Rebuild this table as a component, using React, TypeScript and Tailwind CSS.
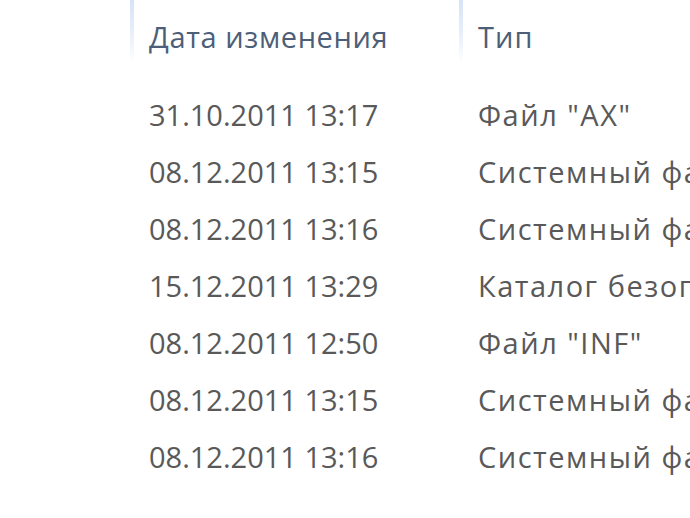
const rows: [string, string][] = [
  ["31.10.2011 13:17", 'Файл "AX"'],
  ["08.12.2011 13:15", "Системный файл"],
  ["08.12.2011 13:16", "Системный файл"],
  ["15.12.2011 13:29", "Каталог безопасности"],
  ["08.12.2011 12:50", 'Файл "INF"'],
  ["08.12.2011 13:15", "Системный файл"],
  ["08.12.2011 13:16", "Системный файл"],
];

function Sep() {
  return (
    <div className="w-[4px] h-[64px] shrink-0 self-start bg-gradient-to-b from-[#d6e4f6] via-[#e6eefa] to-transparent" />
  );
}

export default function App() {
  return (
    <div
      className="w-[690px] h-[518px] overflow-hidden bg-white text-[29px] whitespace-nowrap"
      style={{ fontFamily: '"Open Sans", "Noto Sans", sans-serif' }}
    >
      <div className="flex h-[74px] items-center">
        <div className="w-[130px] shrink-0" />
        <Sep />
        <div className="w-[325px] shrink-0 pl-[15px] text-[#4d5f78] tracking-[0.6px]">Дата изменения</div>
        <Sep />
        <div className="pl-[15px] text-[#4d5f78] tracking-[1px]">Тип</div>
      </div>
      <div className="mt-[12px] flex flex-col">
        {rows.map(([date, type], i) => (
          <div key={i} className="flex h-[57px] items-center text-[#595959]">
            <div className="w-[149px] shrink-0" />
            <div className="w-[329px] shrink-0">{date}</div>
            <div className="shrink-0 tracking-[1.5px]">{type}</div>
          </div>
        ))}
      </div>
    </div>
  );
}
